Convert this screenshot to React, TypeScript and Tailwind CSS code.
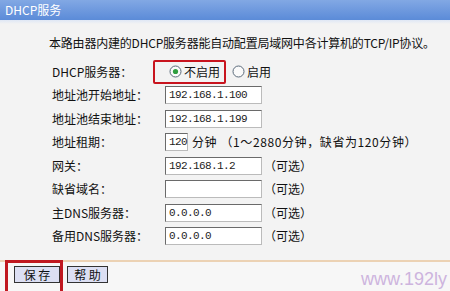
import React from "react";

const CJK = { fontFamily: '"Noto Sans CJK SC", "Noto Sans", sans-serif' };
const MONO = { fontFamily: '"Liberation Mono", "DejaVu Sans Mono", monospace' };

function Input({ value, w = "w-[97px]" }: { value: string; w?: string }) {
  return (
    <div
      className={`${w} h-[18px] bg-white border border-[#6a6a6a] border-r-[#bbb] border-b-[#bbb] flex items-center pl-[3px] text-[11px] tracking-[-0.6px] text-[#222]`}
      style={MONO}
    >
      {value}
    </div>
  );
}

function Radio({ checked }: { checked?: boolean }) {
  return (
    <svg width="13" height="13" viewBox="0 0 13 13" className="shrink-0">
      <circle cx="6.5" cy="6.5" r="5.5" fill="#fafafa" stroke="#5a6a7a" strokeWidth="1" />
      {checked && <circle cx="6.5" cy="6.5" r="2.6" fill="#2f9e3f" />}
    </svg>
  );
}

function Row({ label, children }: { label: string; children?: React.ReactNode }) {
  return (
    <div className="flex items-center h-[23.5px]">
      <div className="w-[113px] shrink-0 text-[12px] text-[#111]">{label}</div>
      <div className="flex items-center h-full">{children}</div>
    </div>
  );
}

const Optional = () => <span className="ml-[2px] text-[12px] text-[#111]">（可选）</span>;

export default function App() {
  return (
    <div className="w-[450px] h-[291px] overflow-hidden relative bg-[#f3f3f3] flex flex-col" style={CJK}>
      <div className="h-[20px] shrink-0 bg-gradient-to-b from-[#82a8e4] to-[#5b8bd8] flex items-center pl-[5px] text-white text-[12px]">
        DHCP服务
      </div>
      <div className="h-[4px] shrink-0 bg-gradient-to-b from-[#dfe7f5] to-[#f3f3f3]" />
      <div className="pl-[49px] mt-[12px] text-[12px] text-[#111] leading-[14px] tracking-[-0.2px]">
        本路由器内建的DHCP服务器能自动配置局域网中各计算机的TCP/IP协议。
      </div>
      <div className="pl-[52px] mt-[10px] flex flex-col">
        <Row label="DHCP服务器：">
          <div className="relative flex items-center h-full">
            <div className="absolute left-[-12px] top-0 w-[73px] h-[23.5px] border-2 border-[#c8141e] rounded-[2px]" />
            <div className="flex items-center ml-[4px]">
              <Radio checked />
              <span className="ml-[2px] text-[12px] text-[#111]">不启用</span>
            </div>
            <div className="flex items-center ml-[12px]">
              <Radio />
              <span className="ml-[2px] text-[12px] text-[#111]">启用</span>
            </div>
          </div>
        </Row>
        <Row label="地址池开始地址：">
          <Input value="192.168.1.100" />
        </Row>
        <Row label="地址池结束地址：">
          <Input value="192.168.1.199" />
        </Row>
        <Row label="地址租期：">
          <Input value="120" w="w-[23px]" />
          <span className="ml-[4px] text-[12px] text-[#111] whitespace-nowrap tracking-[0.6px]">分钟 （1～2880分钟，缺省为120分钟）</span>
        </Row>
        <Row label="网关：">
          <Input value="192.168.1.2" />
          <Optional />
        </Row>
        <Row label="缺省域名：">
          <Input value="" />
          <Optional />
        </Row>
        <Row label="主DNS服务器：">
          <Input value="0.0.0.0" />
          <Optional />
        </Row>
        <Row label="备用DNS服务器：">
          <Input value="0.0.0.0" />
          <Optional />
        </Row>
      </div>
      <div className="mt-[12px] h-[2px] shrink-0 bg-[#ecd2b4]" />
      <div className="flex-1 bg-[#f7f7f7] flex items-start pl-[14px] pt-[4px] gap-[7px]">
        <div className="relative">
          <div className="absolute left-[-9px] top-[-6px] w-[58px] h-[40px] border-[3px] border-[#c01820]" />
          <div className="w-[46px] h-[17px] bg-[#dcdff3] border border-[#333] flex items-center justify-center text-[12px] text-[#111]">
            保 存
          </div>
        </div>
        <div className="w-[41px] h-[17px] bg-[#dcdff3] border border-[#333] flex items-center justify-center text-[12px] text-[#111]">
          帮 助
        </div>
      </div>
      <div
        className="absolute left-[361px] top-[269px] text-[18px] leading-[20px] text-[#cdb4de] whitespace-nowrap"
        style={{ fontFamily: '"Liberation Sans", Arial, sans-serif' }}
      >
        www.192ly
      </div>
    </div>
  );
}
